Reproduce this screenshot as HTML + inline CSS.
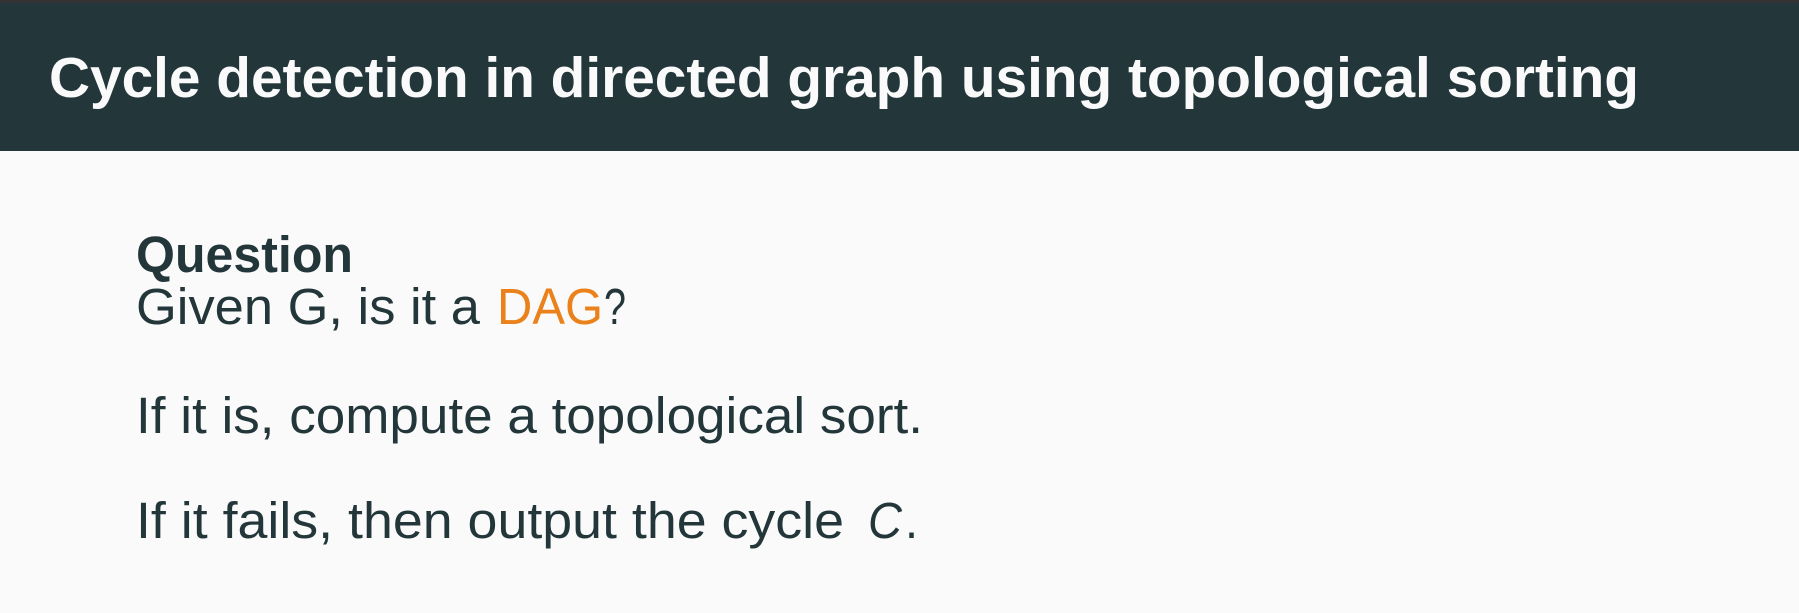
<!DOCTYPE html>
<html><head><meta charset="utf-8"><style>
html,body{margin:0;padding:0;background:#fafafa;}
svg{display:block;}
</style></head><body>
<svg width="1799" height="613" xmlns="http://www.w3.org/2000/svg">
<rect x="0" y="0" width="1799" height="613" fill="#fafafa"/>
<rect x="0" y="0" width="1799" height="151" fill="#23373b"/>
<rect x="0" y="0" width="1799" height="3" fill="#333"/>
<g font-family="Liberation Sans, sans-serif">
<text x="49" y="97" font-size="57" font-weight="bold" fill="#fafafa" textLength="1590" lengthAdjust="spacingAndGlyphs">Cycle detection in directed graph using topological sorting</text>
<g fill="#23373b" font-size="51">
<text x="136" y="272" font-weight="bold" textLength="217" lengthAdjust="spacingAndGlyphs">Question</text>
<text x="136" y="324" textLength="344" lengthAdjust="spacingAndGlyphs">Given G, is it a</text>
<text x="497" y="324" fill="#eb811b" textLength="106" lengthAdjust="spacingAndGlyphs">DAG</text>
<text x="604" y="324" textLength="22" lengthAdjust="spacingAndGlyphs">?</text>
<text x="136" y="433" textLength="787" lengthAdjust="spacingAndGlyphs">If it is, compute a topological sort.</text>
<text x="136" y="538" textLength="708" lengthAdjust="spacingAndGlyphs">If it fails, then output the cycle</text>
<text x="868" y="538" font-style="italic" textLength="34" lengthAdjust="spacingAndGlyphs">C</text>
<text x="905" y="538" textLength="13" lengthAdjust="spacingAndGlyphs">.</text>
</g>
</g>
</svg>
</body></html>
